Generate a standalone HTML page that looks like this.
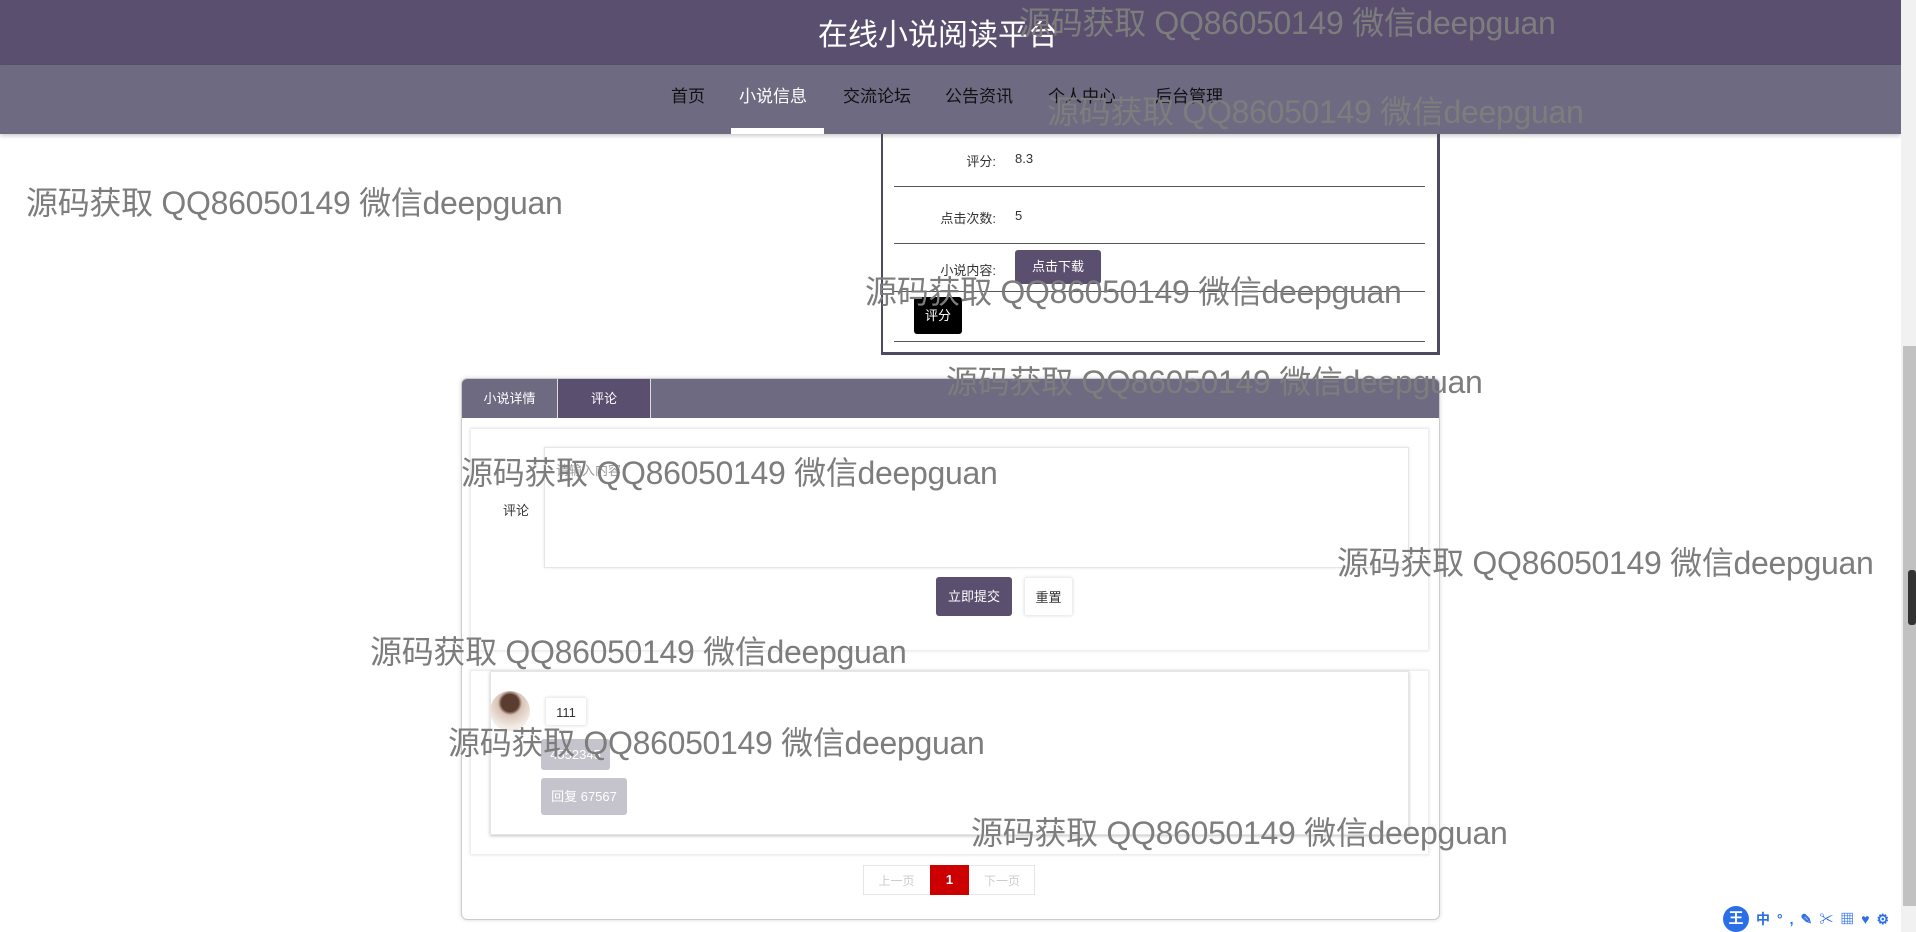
<!DOCTYPE html>
<html><head><meta charset="utf-8"><style>
*{margin:0;padding:0;box-sizing:border-box}
body{width:1916px;height:932px;overflow:hidden;background:#fff;position:relative;font-family:"Liberation Sans","Noto Sans CJK SC",sans-serif;color:#333}
.a{position:absolute}
.top{left:0;top:0;width:1901px;height:65px;background:#5b4f6f}
.title{left:0;width:1876px;top:10px;text-align:center;color:#fff;font-size:30px}
.nav{left:0;top:65px;width:1901px;height:69px;background:#6e6a82;box-shadow:0 2px 4px rgba(0,0,0,.2)}
.ni{top:82px;font-size:17px;color:#111}
.wm{font-family:"Liberation Sans","Noto Sans CJK SC",sans-serif;font-size:32px;color:#7d7d7d;white-space:nowrap;z-index:10;letter-spacing:-0.3px}
.lbl{font-size:13px;color:#333}
.hr{height:1px;background:#555;left:894px;width:531px}
.btn{color:#fff;font-size:13px;text-align:center;border-radius:3px}
</style></head><body>
<div class="a top"></div>
<div class="a title">在线小说阅读平台</div>
<div class="a nav"></div>
<div class="a ni" style="left:671px">首页</div>
<div class="a ni" style="left:739px;color:#fff">小说信息</div>
<div class="a ni" style="left:843px">交流论坛</div>
<div class="a ni" style="left:945px">公告资讯</div>
<div class="a ni" style="left:1048px">个人中心</div>
<div class="a ni" style="left:1155px">后台管理</div>
<div class="a" style="left:731px;top:128px;width:93px;height:6px;background:#fff"></div>

<div class="a" style="left:1901px;top:0;width:15px;height:932px;background:#f1f1f1"></div>
<div class="a" style="left:1903px;top:346px;width:13px;height:560px;background:#c1c1c1"></div>
<div class="a" style="left:1908px;top:570px;width:8px;height:55px;background:#333;border-radius:3px"></div>

<div class="a" style="left:881px;top:134px;width:559px;height:221px;border:3px solid #4f4a5e;border-top:none;border-left-width:2px;border-right-width:3px"></div>
<div class="a lbl" style="left:940px;width:56px;text-align:right;top:151px">评分:</div>
<div class="a lbl" style="left:1015px;top:151px">8.3</div>
<div class="a hr" style="top:186px"></div>
<div class="a lbl" style="left:920px;width:76px;text-align:right;top:208px">点击次数:</div>
<div class="a lbl" style="left:1015px;top:208px">5</div>
<div class="a hr" style="top:243px"></div>
<div class="a lbl" style="left:920px;width:76px;text-align:right;top:260px">小说内容:</div>
<div class="a btn" style="left:1015px;top:250px;width:86px;height:34px;line-height:34px;background:#5b4f6f">点击下载</div>
<div class="a hr" style="top:291px"></div>
<div class="a btn" style="left:914px;top:297px;width:48px;height:37px;line-height:37px;background:#000">评分</div>
<div class="a hr" style="top:341px"></div>

<div class="a" style="left:461px;top:378px;width:979px;height:542px;border:1px solid #ccc;border-radius:6px;box-shadow:0 0 4px rgba(0,0,0,.15);overflow:hidden">
 <div style="height:39px;background:#6e6a82;position:relative">
  <div class="a" style="left:0;top:0;width:95px;height:39px;line-height:39px;text-align:center;color:#fff;font-size:13px">小说详情</div>
  <div class="a" style="left:95px;top:0;width:94px;height:39px;line-height:39px;text-align:center;color:#fff;font-size:13px;background:#5b4f6f;border-left:1px solid #ddd;border-right:1px solid #ddd">评论</div>
 </div>
</div>
<div class="a" style="left:470px;top:428px;width:959px;height:223px;border:1px solid #eee;box-shadow:0 0 3px rgba(0,0,0,.12)"></div>
<div class="a" style="left:544px;top:447px;width:865px;height:121px;border:1px solid #e6e6e6;box-shadow:0 0 3px rgba(0,0,0,.1)"></div>
<div class="a" style="left:556px;top:460px;font-size:13px;color:#999">请输入内容</div>
<div class="a lbl" style="left:503px;top:500px">评论</div>
<div class="a btn" style="left:936px;top:577px;width:76px;height:39px;line-height:39px;background:#5b4f6f">立即提交</div>
<div class="a" style="left:1024px;top:577px;width:49px;height:39px;line-height:39px;text-align:center;font-size:13px;border:1px solid #eee;box-shadow:0 0 3px rgba(0,0,0,.12);border-radius:3px">重置</div>

<div class="a" style="left:470px;top:670px;width:959px;height:185px;border:1px solid #eee;box-shadow:0 0 3px rgba(0,0,0,.12)"></div>
<div class="a" style="left:490px;top:671px;width:919px;height:164px;border:1px solid #e6e6e6;box-shadow:0 1px 3px rgba(0,0,0,.25)"></div>
<div class="a" style="left:490px;top:691px;width:40px;height:40px;border-radius:50%;background:radial-gradient(circle at 50% 30%,#5a3c30 0 25%,#d9c4b6 35%,#f2ebe6 70%)"></div>
<div class="a" style="left:545px;top:697px;width:42px;height:29px;line-height:29px;text-align:center;font-size:13px;border:1px solid #eee;box-shadow:0 0 3px rgba(0,0,0,.12);border-radius:3px">111</div>
<div class="a btn" style="left:541px;top:739px;width:69px;height:31px;line-height:31px;background:#c5c3cc">4552345</div>
<div class="a btn" style="left:541px;top:778px;width:86px;height:37px;line-height:37px;background:#c5c3cc">回复 67567</div>

<div class="a" style="left:863px;top:865px;width:172px;height:30px;border:1px solid #e6e6e6"></div>
<div class="a" style="left:863px;top:872px;width:67px;text-align:center;font-size:12px;color:#ccc">上一页</div>
<div class="a" style="left:930px;top:865px;width:39px;height:30px;line-height:30px;text-align:center;font-size:13px;color:#fff;background:#c00;font-weight:bold">1</div>
<div class="a" style="left:969px;top:872px;width:66px;text-align:center;font-size:12px;color:#ccc">下一页</div>

<div class="a" style="left:1723px;top:906px;width:26px;height:26px;border-radius:50%;background:#2a6ee8;color:#fff;font-size:15px;text-align:center;line-height:26px;font-weight:bold">王</div>
<div class="a" style="left:1756px;top:909px;font-size:14px;color:#2a6ee8;font-weight:bold;white-space:nowrap;letter-spacing:7px;width:170px">中°,✎✂▦♥⚙</div>

<div class="a wm" style="left:1019px;top:-2px">源码获取 QQ86050149 微信deepguan</div>
<div class="a wm" style="left:1047px;top:87px">源码获取 QQ86050149 微信deepguan</div>
<div class="a wm" style="left:26px;top:178px">源码获取 QQ86050149 微信deepguan</div>
<div class="a wm" style="left:865px;top:267px">源码获取 QQ86050149 微信deepguan</div>
<div class="a wm" style="left:946px;top:357px">源码获取 QQ86050149 微信deepguan</div>
<div class="a wm" style="left:461px;top:448px">源码获取 QQ86050149 微信deepguan</div>
<div class="a wm" style="left:1337px;top:538px">源码获取 QQ86050149 微信deepguan</div>
<div class="a wm" style="left:370px;top:627px">源码获取 QQ86050149 微信deepguan</div>
<div class="a wm" style="left:448px;top:718px">源码获取 QQ86050149 微信deepguan</div>
<div class="a wm" style="left:971px;top:808px">源码获取 QQ86050149 微信deepguan</div>
</body></html>
